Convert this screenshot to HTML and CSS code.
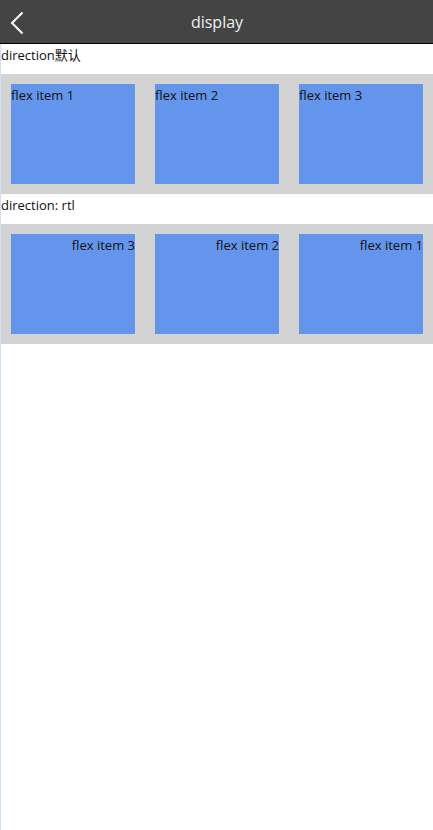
FILE: index.html
```html
<!DOCTYPE html>
<html>
<head>
<meta charset="utf-8">
<link rel="stylesheet" href="styles.css">
</head>
<body>
<header class="bar">
  <svg class="back" width="16" height="24" viewBox="0 0 16 24"><polyline points="12.5,1.5 2,12 12.5,22.5" fill="none" stroke="#ffffff" stroke-width="2"/></svg>
  <span class="title">display</span>
</header>
<main class="page">
  <div class="label">direction默认</div>
  <div class="box">
    <div class="item">flex item 1</div>
    <div class="item">flex item 2</div>
    <div class="item">flex item 3</div>
  </div>
  <div class="label">direction: rtl</div>
  <div class="box rtl">
    <div class="item">flex item 1</div>
    <div class="item">flex item 2</div>
    <div class="item">flex item 3</div>
  </div>
</main>
</body>
</html>
```
FILE: styles.css
```css
html, body { margin: 0; padding: 0; height: 100%; }
body {
  font-family: "Open Sans", "Noto Sans CJK SC", sans-serif;
  font-size: 13px;
  color: #111;
  background: #fff;
  display: flex;
  flex-direction: column;
}
.bar {
  height: 43px;
  background: #444444;
  border-bottom: 1px solid #000;
  display: flex;
  align-items: center;
  justify-content: center;
  position: relative;
  flex: none;
}
.back { position: absolute; left: 10px; top: 11px; }
.title { color: #f0f0f0; font-size: 16px; padding-left: 1px; }
.page {
  flex: 1;
  border-left: 1px solid #cfe0f4;
}
.label { height: 20px; line-height: 22px; margin-bottom: 10px; }
.box {
  background: #d3d3d3;
  padding: 10px;
  display: flex;
  gap: 20px;
}
.box.rtl { direction: rtl; }
.item {
  width: 124px;
  height: 100px;
  background: #6495ed;
  line-height: 22px;
}
```
